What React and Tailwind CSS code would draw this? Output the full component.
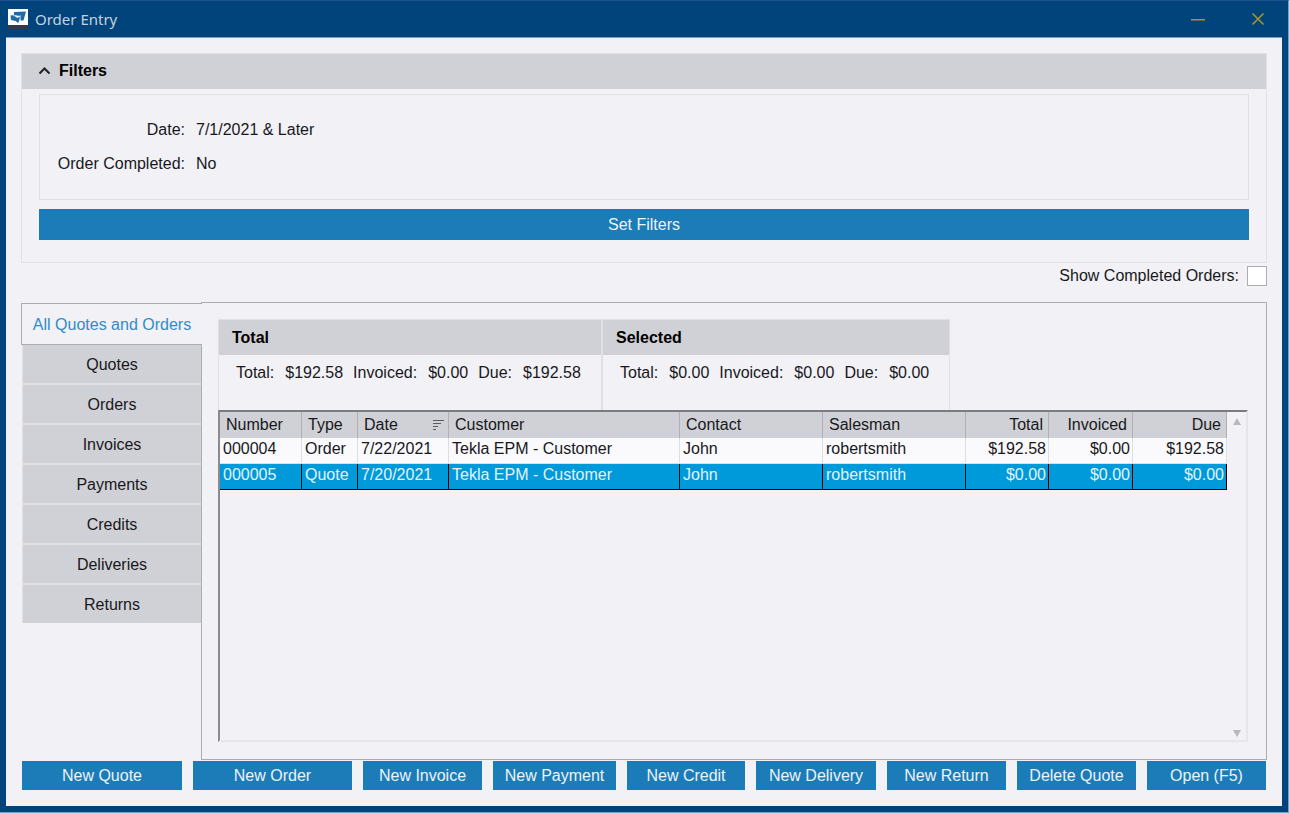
import { Fragment } from 'react'

const tabs = [
  'All Quotes and Orders',
  'Quotes',
  'Orders',
  'Invoices',
  'Payments',
  'Credits',
  'Deliveries',
  'Returns',
]

const columns = [
  { label: 'Number', width: 'w-[82px]' },
  { label: 'Type', width: 'w-[56px]' },
  { label: 'Date', width: 'w-[91px]', sorted: true },
  { label: 'Customer', width: '' },
  { label: 'Contact', width: 'w-[143px]' },
  { label: 'Salesman', width: 'w-[143px]' },
  { label: 'Total', width: 'w-[83px]', right: true },
  { label: 'Invoiced', width: 'w-[84px]', right: true },
  { label: 'Due', width: 'w-[94px]', right: true },
]

const orders = [
  ['000004', 'Order', '7/22/2021', 'Tekla EPM - Customer', 'John', 'robertsmith', '$192.58', '$0.00', '$192.58'],
  ['000005', 'Quote', '7/20/2021', 'Tekla EPM - Customer', 'John', 'robertsmith', '$0.00', '$0.00', '$0.00'],
]

const selectedNumber = '000005'

const actions = [
  { label: 'New Quote', grow: 'grow-[160]' },
  { label: 'New Order', grow: 'grow-[159]' },
  { label: 'New Invoice', grow: 'grow-[119]' },
  { label: 'New Payment', grow: 'grow-[123]' },
  { label: 'New Credit', grow: 'grow-[118]' },
  { label: 'New Delivery', grow: 'grow-[120]' },
  { label: 'New Return', grow: 'grow-[119]' },
  { label: 'Delete Quote', grow: 'grow-[119]' },
  { label: 'Open (F5)', grow: 'grow-[119]' },
]

export default function App() {
  return (
    <div className="min-h-screen flex flex-col bg-[#00447b] border-t border-r border-b border-t-[#1b5488] border-r-[#7ba0c2] border-b-[#7ba0c2] font-['Liberation_Sans',Arial,sans-serif] text-base leading-5 text-[#18181c]">
      <TitleBar />
      <main className="flex-1 flex flex-col mx-[6px] mb-[6px] border-t border-[#7ba0c2] bg-[#f2f1f6] px-[15px] pt-[15px] pb-4">
        <Filters />
        <div className="flex justify-end items-center gap-2 mt-[3px] mb-4">
          <label htmlFor="show-completed">Show Completed Orders:</label>
          <input
            id="show-completed"
            type="checkbox"
            className="appearance-none w-5 h-5 bg-white border border-[#adadad] checked:bg-[#1b7cb8]"
          />
        </div>
        <div className="flex-1 flex">
          <nav className="relative w-[181px] pt-px -mr-px shrink-0 flex flex-col" role="tablist">
            {tabs.map((tab, i) => (
              <Tab key={tab} label={tab} active={i === 0} />
            ))}
          </nav>
          <section className="flex-1 min-w-0 flex flex-col border border-[#adadad] pl-4 pr-[18px] pt-4 pb-[17px]">
            <div className="flex">
              <Summary title="Total" width="w-[384px]" total="$192.58" invoiced="$0.00" due="$192.58" />
              <Summary title="Selected" width="w-[348px]" total="$0.00" invoiced="$0.00" due="$0.00" />
            </div>
            <OrderTable />
          </section>
        </div>
        <div className="flex gap-[11px] mt-px mx-px">
          {actions.map(({ label, grow }) => (
            <button
              key={label}
              type="button"
              className={`${grow} basis-0 min-w-0 h-[29px] bg-[#1b7cb8] text-[#edf3f8] whitespace-nowrap`}
            >
              {label}
            </button>
          ))}
        </div>
      </main>
    </div>
  )
}

function TitleBar() {
  return (
    <header className="h-9 flex items-center px-2 pb-px text-[#c4d2df]">
      <svg className="w-5 h-5" viewBox="0 0 20 20" aria-hidden="true">
        <rect width="20" height="16" fill="#fff" />
        <rect y="16" width="20" height="4" fill="#3a3548" />
        <path d="M6 3 L18 2.500 L15.500 11.500 L12.500 11.500 L12 7 L6 6 Z" fill="#1b6ca8" />
        <path d="M2.500 6.500 L6 6 L9 8.500 L12 7.500 L12 10 L10 14 L7.500 12 L3 11 Z" fill="#1b6ca8" />
        <path d="M5 6 L9.500 8.500 L13 6.500 M12 7 L12 11.500" fill="none" stroke="#e6f0f7" strokeWidth="0.700" />
      </svg>
      <h1 className="ml-[7px] flex-1 font-['Noto_Sans',sans-serif] text-[15px]">Order Entry</h1>
      <button type="button" aria-label="Minimize" className="w-[60px] h-9 flex items-center justify-center text-[#a6942d]">
        <svg className="w-[14px] h-[14px]" viewBox="0 0 14 14" fill="currentColor">
          <rect x="0" y="7" width="14" height="1.500" />
        </svg>
      </button>
      <button type="button" aria-label="Close" className="w-[60px] h-9 -mr-2 flex items-center justify-center text-[#a6942d]">
        <svg className="w-[14px] h-[14px]" viewBox="0 0 14 14" stroke="currentColor" strokeWidth="1.600">
          <path d="M1.500 1.500 L12.500 12.500 M12.500 1.500 L1.500 12.500" />
        </svg>
      </button>
    </header>
  )
}

function Filters() {
  return (
    <section className="border border-[#e1e1e4] pb-[22px]">
      <h2>
        <button type="button" className="w-full h-[35px] pb-[2px] bg-[#d0d1d6] flex items-center gap-2 pl-4 font-bold text-black">
          <svg className="w-[13px] h-[10px]" viewBox="0 0 13 10" fill="none" stroke="#222" strokeWidth="2">
            <path d="M1.500 7.500 L6.500 2.500 L11.500 7.500" />
          </svg>
          Filters
        </button>
      </h2>
      <div className="mx-[17px] mt-[5px]">
        <dl className="grid grid-cols-[145px_1fr] gap-x-[11px] gap-y-[14px] content-start min-h-[106px] pt-[25px] border border-[#dfdfe2]">
          <dt className="text-right">Date:</dt>
          <dd>7/1/2021 &amp; Later</dd>
          <dt className="text-right">Order Completed:</dt>
          <dd>No</dd>
        </dl>
        <button type="button" className="w-full h-[31px] mt-[9px] bg-[#1b7cb8] text-[#edf3f8]">
          Set Filters
        </button>
      </div>
    </section>
  )
}

function Tab({ label, active }) {
  if (active) {
    return (
      <button
        type="button"
        role="tab"
        aria-selected="true"
        className="relative h-[42px] pt-[2px] border border-r-0 border-[#adadad] bg-[#f2f1f6] text-[#2f8cc8] whitespace-nowrap"
      >
        {label}
      </button>
    )
  }
  return (
    <button
      type="button"
      role="tab"
      aria-selected="false"
      className="h-10 mx-px pt-[2px] border-b-2 border-l border-[#e1e1e3] bg-[#d0d1d6] last:h-[38px] last:border-b-0"
    >
      {label}
    </button>
  )
}

function Summary({ title, width, total, invoiced, due }) {
  const amounts = [
    ['Total:', total],
    ['Invoiced:', invoiced],
    ['Due:', due],
  ]
  return (
    <div className={`${width} h-[91px] border border-b-0 border-[#e1e1e4]`}>
      <h2 className="h-[35px] flex items-center pl-[13px] bg-[#d0d1d6] font-bold text-black">{title}</h2>
      <div className="flex pl-[17px] pt-2">
        {amounts.map(([label, value]) => (
          <Fragment key={label}>
            <span className="mr-[11px]">{label}</span>
            <span className="mr-[10px]">{value}</span>
          </Fragment>
        ))}
      </div>
    </div>
  )
}

function OrderTable() {
  return (
    <div className="flex-1 flex border-t-2 border-l-2 border-t-[#7c7c80] border-l-[#8b8b8f] border-r-2 border-b-2 border-r-[#e6e6e8] border-b-[#e6e6e8]">
      <div className="flex-1 min-w-0">
        <table className="w-full table-fixed border-separate border-spacing-0">
          <thead>
            <tr className="h-[26px] bg-[#d0d1d6]">
              {columns.map(({ label, width, right, sorted }) => (
                <th
                  key={label}
                  className={`${width} p-0 font-normal border-r border-[#b0b0b4] ${right ? 'text-right pr-[5px]' : 'text-left pl-[6px]'}`}
                >
                  {sorted ? (
                    <span className="flex items-center justify-between pr-1">
                      {label}
                      <SortIcon />
                    </span>
                  ) : (
                    label
                  )}
                </th>
              ))}
            </tr>
          </thead>
          <tbody>
            {orders.map((order) => (
              <OrderRow key={order[0]} order={order} selected={order[0] === selectedNumber} />
            ))}
          </tbody>
        </table>
      </div>
      <div className="w-[19px] flex flex-col justify-between items-center pt-[6px] pb-[3px]" aria-hidden="true">
        <svg className="w-2 h-[7px]" viewBox="0 0 8 7">
          <path d="M4 0 L8 7 H0 Z" fill="#b9b9bd" />
        </svg>
        <svg className="w-2 h-[7px]" viewBox="0 0 8 7">
          <path d="M0 0 H8 L4 7 Z" fill="#b9b9bd" />
        </svg>
      </div>
    </div>
  )
}

function OrderRow({ order, selected }) {
  const rowStyle = selected ? 'bg-[#0099da] text-[#e3f3fb]' : 'bg-[#faf9fc]'
  const cellStyle = selected ? 'border-r border-b border-black' : 'border-r border-b border-[#dedee1]'
  return (
    <tr className={`h-[26px] ${rowStyle}`} aria-selected={selected}>
      {order.map((value, i) => (
        <td
          key={columns[i].label}
          className={`p-0 pb-[3px] whitespace-nowrap ${cellStyle} ${columns[i].right ? 'text-right pr-[2px]' : 'pl-[3px]'}`}
        >
          {value}
        </td>
      ))}
    </tr>
  )
}

function SortIcon() {
  return (
    <svg className="w-[11px] h-[10px]" viewBox="0 0 11 10" stroke="#5d5d61" aria-hidden="true">
      <path d="M0 0.500 H11 M0 3.500 H8 M0 6.500 H5 M0 9.500 H3" />
    </svg>
  )
}
